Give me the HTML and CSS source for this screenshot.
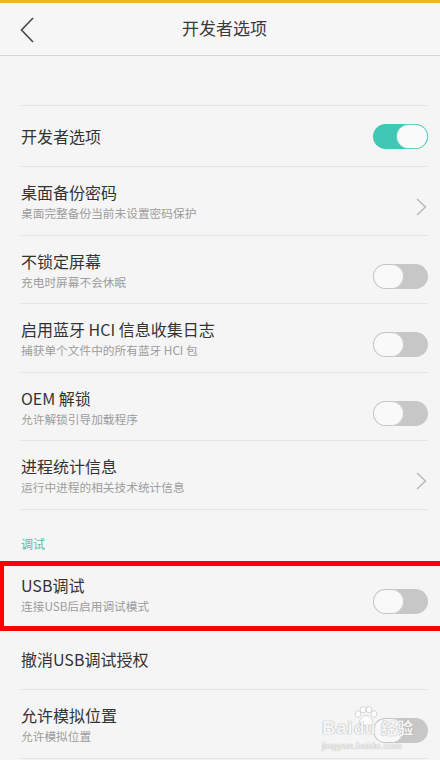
FILE: index.html
```html
<!DOCTYPE html>
<html lang="zh-CN">
<head>
<meta charset="utf-8">
<title>开发者选项</title>
<link rel="stylesheet" href="styles.css">
</head>
<body>
<div class="screen">
  <div class="statusbar"></div>
  <header class="header">
    <div class="back">
      <svg width="14" height="26" viewBox="0 0 14 26"><polyline points="13,1 1.5,13 13,25" fill="none" stroke="#464646" stroke-width="1.6" stroke-linejoin="miter"/></svg>
    </div>
    <div class="title">开发者选项</div>
    <div></div>
  </header>
  <div class="spacer"></div>
  <div class="list">
    <div class="row single first">
      <div class="text"><div class="t">开发者选项</div></div>
      <div class="toggle on"><span class="knob"></span></div>
    </div>
    <div class="row">
      <div class="text"><div class="t">桌面备份密码</div><div class="s">桌面完整备份当前未设置密码保护</div></div>
      <svg class="chev" width="11" height="18" viewBox="0 0 11 18"><polyline points="1,1 9.5,9 1,17" fill="none" stroke="#b4b4b4" stroke-width="1.3"/></svg>
    </div>
    <div class="row">
      <div class="text"><div class="t">不锁定屏幕</div><div class="s">充电时屏幕不会休眠</div></div>
      <div class="toggle"><span class="knob"></span></div>
    </div>
    <div class="row">
      <div class="text"><div class="t">启用蓝牙 HCI 信息收集日志</div><div class="s">捕获单个文件中的所有蓝牙 HCI 包</div></div>
      <div class="toggle"><span class="knob"></span></div>
    </div>
    <div class="row">
      <div class="text"><div class="t">OEM 解锁</div><div class="s">允许解锁引导加载程序</div></div>
      <div class="toggle"><span class="knob"></span></div>
    </div>
    <div class="row">
      <div class="text"><div class="t">进程统计信息</div><div class="s">运行中进程的相关技术统计信息</div></div>
      <svg class="chev" width="11" height="18" viewBox="0 0 11 18"><polyline points="1,1 9.5,9 1,17" fill="none" stroke="#b4b4b4" stroke-width="1.3"/></svg>
    </div>
  </div>
  <div class="section">调试</div>
  <div class="marked">
    <div class="list">
      <div class="row">
        <div class="text"><div class="t">USB调试</div><div class="s">连接USB后启用调试模式</div></div>
        <div class="toggle"><span class="knob"></span></div>
      </div>
    </div>
    <div class="mark"></div>
  </div>
  <div class="list">
    <div class="row single">
      <div class="text"><div class="t">撤消USB调试授权</div></div>
    </div>
    <div class="row">
      <div class="text"><div class="t">允许模拟位置</div><div class="s">允许模拟位置</div></div>
      <div class="toggle"><span class="knob"></span></div>
    </div>
  </div>
  <div class="watermark">
    <svg class="paw" width="24" height="20" viewBox="0 0 24 20">
      <g fill="#ffffff" fill-opacity="0.9" stroke="#c6c6c6" stroke-width="0.7">
        <ellipse cx="4" cy="8" rx="2.8" ry="3.4"/>
        <ellipse cx="9" cy="3.6" rx="2.8" ry="3.2"/>
        <ellipse cx="15" cy="3.6" rx="2.8" ry="3.2"/>
        <ellipse cx="20" cy="8" rx="2.8" ry="3.4"/>
        <path d="M12 9.5c-3.6 0-6.8 4.4-6.8 7 0 2.2 2.3 3 6.8 3s6.8-.8 6.8-3c0-2.6-3.2-7-6.8-7z"/>
      </g>
    </svg>
    <div class="wm-main"><span class="bai">Bai</span><span class="du">du</span><span class="jy">经验</span></div>
    <div class="wm-url">jingyan.baidu.com</div>
  </div>
</div>
</body>
</html>
```

FILE: styles.css
```css
* {
  box-sizing: border-box;
}

html, body {
  margin: 0;
  padding: 0;
  background: #f5f5f5;
}

body {
  font-family: "Noto Sans CJK SC", "Noto Sans", sans-serif;
  color: #333333;
  overflow: hidden;
}

.screen {
  position: relative;
  width: 440px;
  height: 760px;
  overflow: hidden;
  background: #f5f5f5;
}

.statusbar {
  height: 3px;
  background: #f6b12b;
}

.header {
  display: grid;
  grid-template-columns: 54px 1fr 45px;
  align-items: center;
  height: 53px;
  border-bottom: 1px solid #d6d6d6;
  background: #f6f6f6;
}

.back {
  display: flex;
  align-items: center;
  padding-left: 20px;
  padding-top: 1px;
}

.back svg {
  display: block;
}

.title {
  text-align: center;
  font-size: 17px;
  line-height: 24px;
  color: #3a3a3a;
  padding-bottom: 2px;
}

.spacer {
  height: 49px;
}

.list {
  margin: 0 12px 0 21px;
}

.row {
  display: flex;
  justify-content: space-between;
  align-items: flex-start;
  height: 68.6px;
  padding-top: 14px;
  border-bottom: 1px solid #e4e4e4;
}

.row.first {
  border-top: 1px solid #e4e4e4;
}

.row.single {
  height: 61px;
  padding-top: 0;
  align-items: center;
}

.row.first {
  height: 62px;
}

.text {
  display: flex;
  flex-direction: column;
}

.t {
  font-size: 16px;
  line-height: 23px;
  color: #333333;
}

.s {
  font-size: 11.7px;
  line-height: 17px;
  color: #9d9d9d;
}

.chev {
  align-self: center;
  margin-right: 1px;
  margin-top: -2px;
}

.toggle {
  align-self: center;
  position: relative;
  width: 55px;
  height: 25px;
  border-radius: 13px;
  background: #c7c7c7;
  flex: none;
}

.toggle .knob {
  position: absolute;
  left: 0;
  top: 0;
  width: 31px;
  height: 25px;
  border-radius: 13px;
  background: #f9f9f9;
  box-shadow: inset 0 0 0 1px #c4c4c4;
}

.toggle.on {
  background: #41c8b4;
}

.toggle.on .knob {
  left: auto;
  right: 1px;
  top: 1px;
  width: 30px;
  height: 23px;
  border-radius: 12px;
  background: #fbfbfb;
  box-shadow: 0 0 0 1px #5fd2c1;
}

.section {
  height: 50.5px;
  padding: 25px 0 0 21px;
  font-size: 12px;
  line-height: 17px;
  color: #4fbfac;
}

.marked {
  position: relative;
}

.mark {
  position: absolute;
  left: 0;
  right: -10px;
  top: 1px;
  bottom: -1.5px;
  border: 5px solid #ff0000;
  border-left-width: 4px;
  pointer-events: none;
}

.watermark {
  position: absolute;
  left: 322px;
  top: 706px;
  width: 100px;
  color: #ffffff;
  font-family: "Liberation Sans", Arial, sans-serif;
}

.paw {
  position: absolute;
  left: 32px;
  top: 0;
}

.wm-main {
  position: relative;
  display: flex;
  align-items: baseline;
  margin-top: 10px;
  font-size: 19px;
  font-weight: bold;
  line-height: 22px;
  letter-spacing: 0.5px;
  color: rgba(255, 255, 255, 0.92);
  text-shadow: 0 0 1px #a8a8a8, 0 0 1px #a8a8a8;
}

.wm-main .du {
  margin-left: 1px;
  font-size: 17px;
}

.wm-main .jy {
  margin-left: 5px;
  font-family: "Noto Sans CJK SC", sans-serif;
  font-size: 16px;
  font-weight: bold;
}

.wm-url {
  font-size: 9.5px;
  line-height: 12px;
  margin-top: 0;
  color: rgba(255, 255, 255, 0.92);
  text-shadow: 0 0 1px #b0b0b0, 0 0 1px #b0b0b0;
  letter-spacing: 0.2px;
}
```
